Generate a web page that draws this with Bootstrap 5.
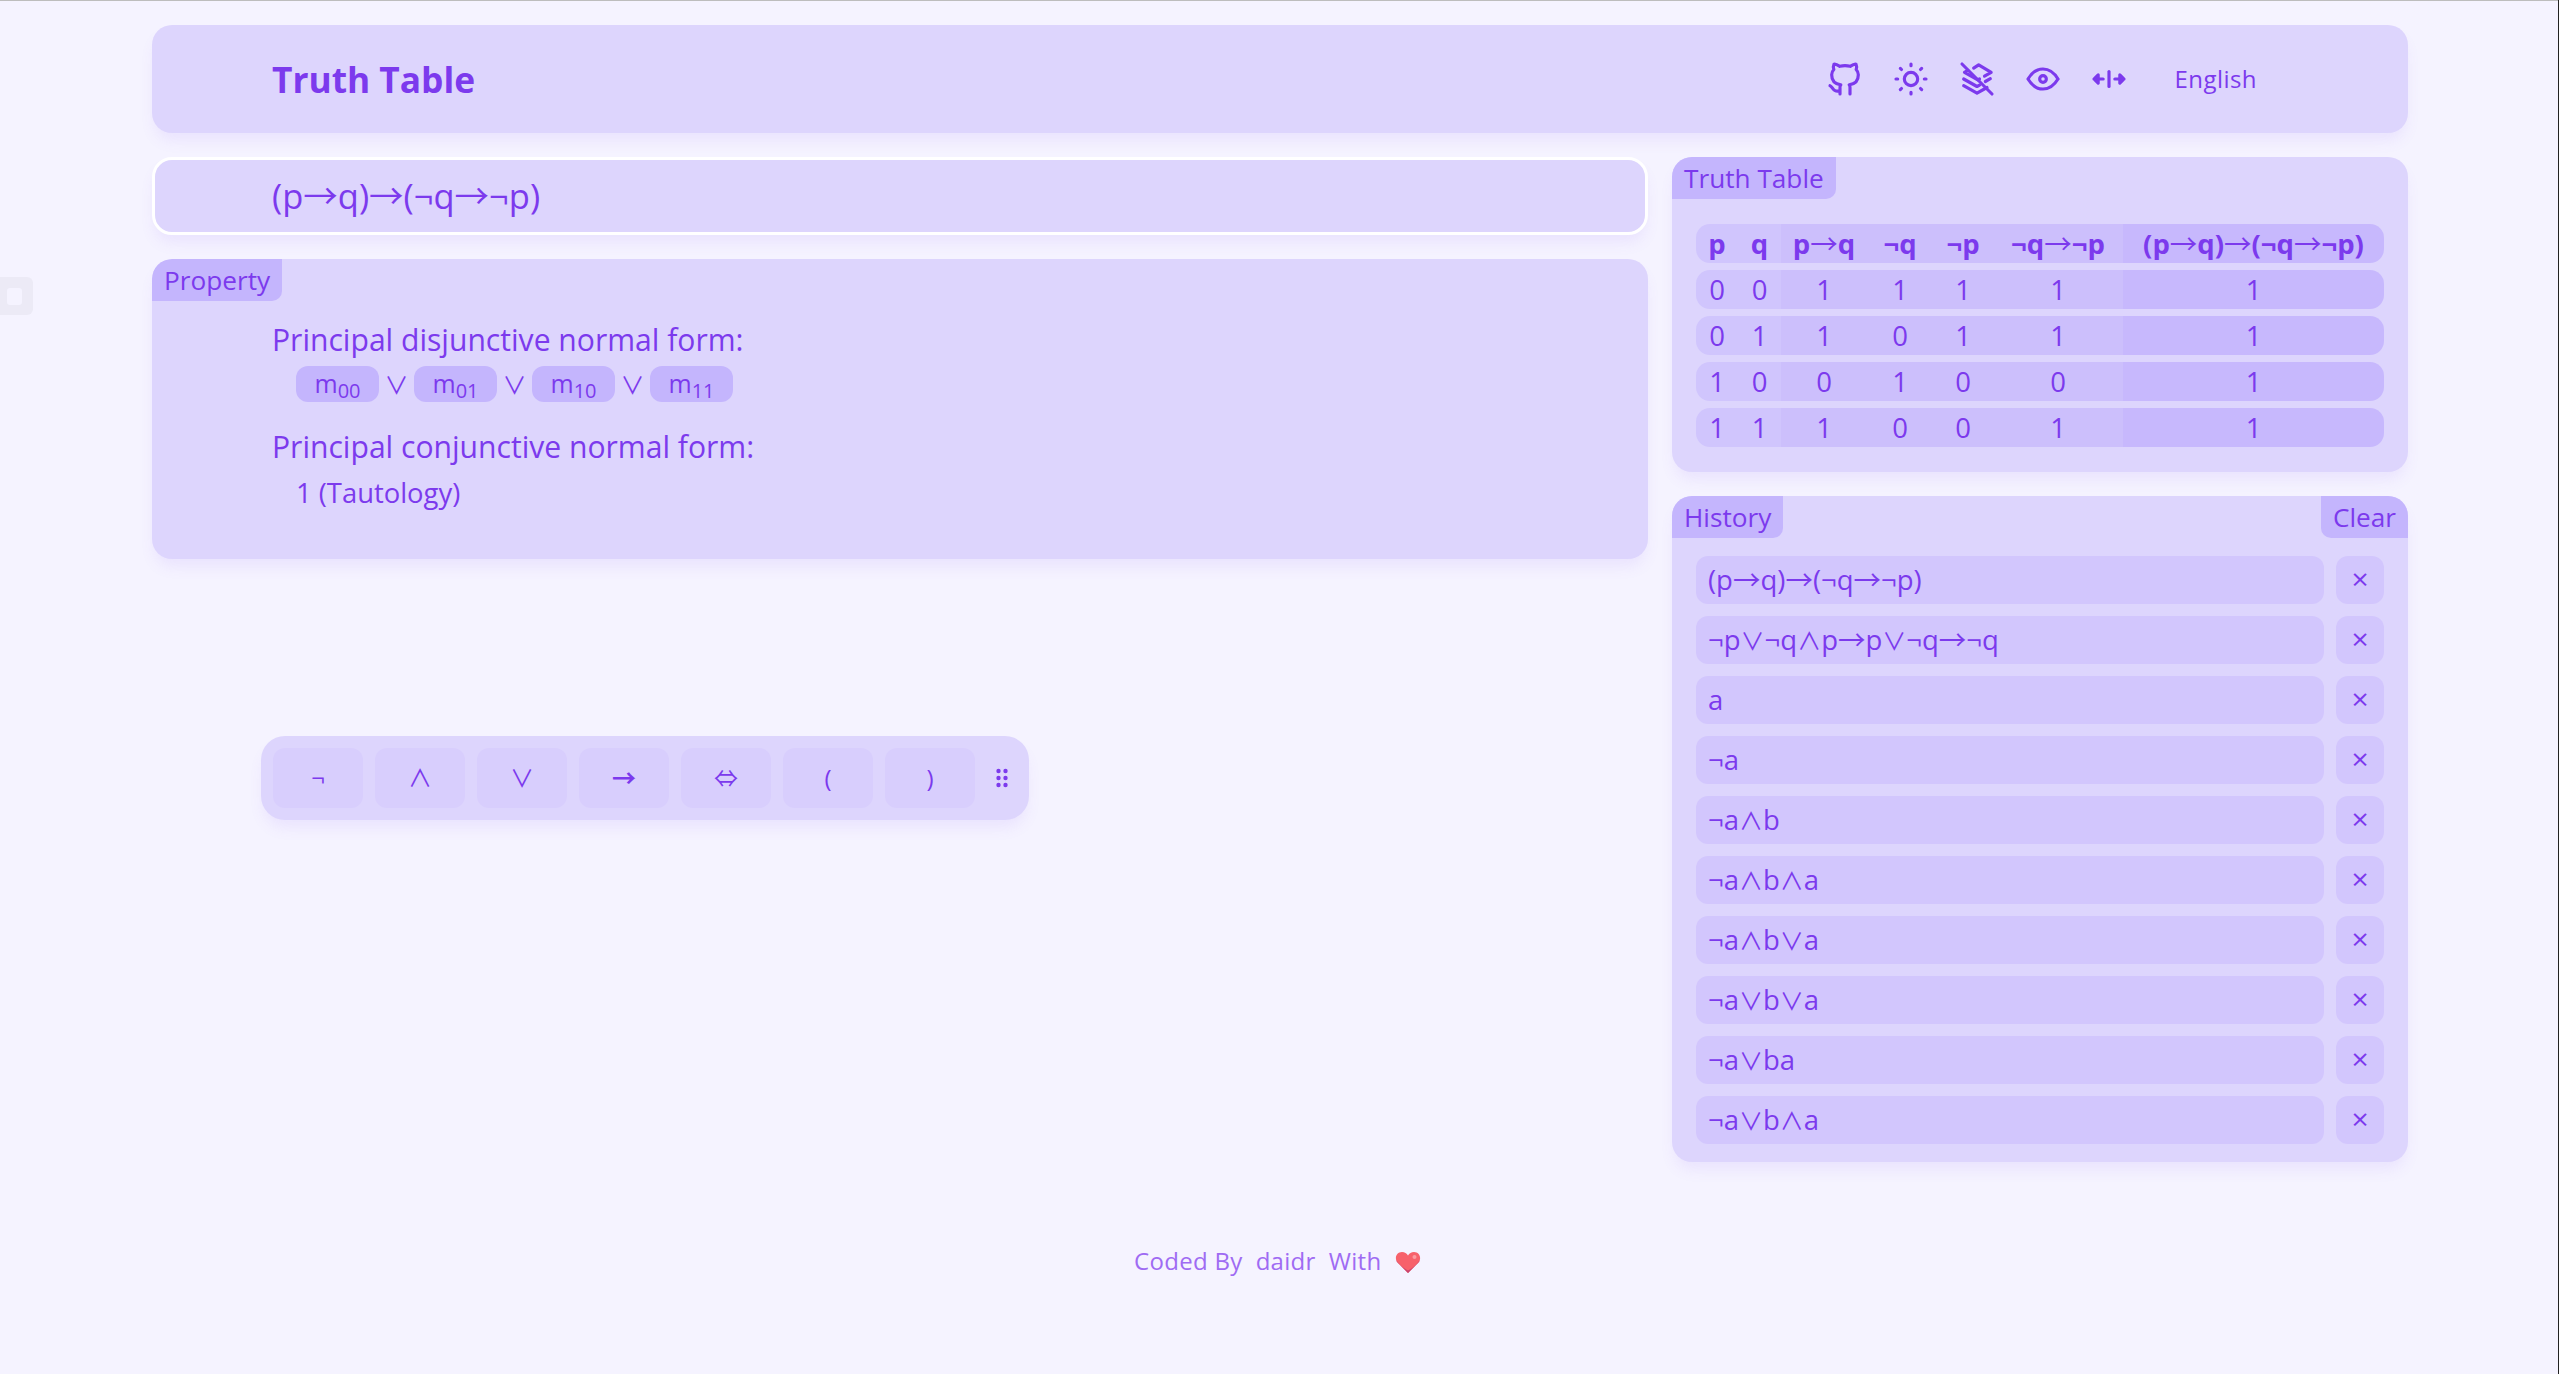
<!DOCTYPE html>
<html lang="en">
<head>
    <meta charset="UTF-8">
    <meta name="viewport" content="width=device-width, initial-scale=1.0">
    <title>Truth Table</title>
    <link href="https://cdn.jsdelivr.net/npm/bootstrap@5.3.0/dist/css/bootstrap.min.css" rel="stylesheet">
    <style>
        body {
            background-color: #f5f3ff;
            font-family: "Open Sans", "Noto Sans", "DejaVu Sans", sans-serif;
            color: #7c3aed;
            min-height: 1374px;
        }

        /* thin window edges in the capture */
        body::before {
            content: "";
            position: fixed;
            left: 0;
            right: 0;
            top: 0;
            height: 1px;
            background: #bdbdbd;
        }

        body::after {
            content: "";
            position: fixed;
            right: 0;
            top: 0;
            bottom: 0;
            width: 1px;
            background: #222;
        }

        .op-arrow, .op-logic {
            font-family: "Noto Sans CJK SC", "DejaVu Sans", sans-serif;
            font-weight: 400;
            line-height: 1;
        }

        .op-logic { font-size: 24px; }

        .page-wrap {
            width: 2256px;
            margin-left: 152px;
            padding-top: 25px;
        }

        .panel-box {
            background: #ddd5fd;
            border-radius: 20px;
            box-shadow: 0 10px 15px -3px rgba(139, 92, 246, .1);
        }

        /* header */
        .top-bar {
            height: 108px;
            padding-left: 120px;
            padding-right: 151px;
            margin-bottom: 24px;
        }

        .app-title {
            font-size: 35.3px;
            font-weight: 700;
            margin: 0;
        }

        .tool-icon {
            width: 40px;
            height: 40px;
            margin-right: 26px;
            fill: none;
            stroke: #7c3aed;
            stroke-width: 1.9;
            stroke-linecap: round;
            stroke-linejoin: round;
        }

        .lang-name {
            font-size: 24px;
            letter-spacing: .45px;
            margin-left: 45px;
        }

        /* columns */
        .left-side { width: 1496px; }
        .right-side { width: 736px; }

        .formula-input.form-control {
            height: 78px;
            line-height: 71px;
            background: #ddd5fd;
            border: 3px solid #fff;
            border-radius: 20px;
            padding: 0 0 0 117px;
            font-size: 34.5px;
            color: #7c3aed;
            margin-bottom: 24px;
            box-shadow: 0 10px 15px -3px rgba(139, 92, 246, .1);
        }

        .tab-row { height: 42px; }

        .tab-label {
            height: 42px;
            line-height: 42px;
            padding: 0 12px;
            font-size: 26.200px;
            background: #c4b5fd;
            border-bottom-right-radius: 10px;
            border-top-left-radius: 20px;
        }

        .tab-clear {
            border-radius: 0 20px 0 10px;
            cursor: pointer;
        }

        /* property */
        .property-box { height: 300px; overflow: hidden; }

        .property-body { padding: 21px 0 0 120px; }

        .prop-heading {
            font-size: 30.100px;
            line-height: 36px;
            margin: 0 0 8px;
        }

        .prop-heading-second {
            margin-top: 27px;
            margin-bottom: 10px;
        }

        .prop-value {
            padding-left: 24px;
            font-size: 27.400px;
            line-height: 36px;
        }

        .term-pill {
            width: 83px;
            height: 36px;
            line-height: 34px;
            text-align: center;
            background: #c4b5fd;
            border-radius: 12px;
            white-space: nowrap;
            font-size: 25px;
        }

        .term-pill sub {
            font-size: 20px;
            bottom: -.25em;
        }

        .term-sep { width: 35px; text-align: center; }

        /* truth table */
        .panel-body-pad { padding: 18px 24px; }

        .truth-grid {
            width: 688px;
            table-layout: fixed;
            border-collapse: separate;
            border-spacing: 0 7px;
            font-size: 27.500px;
            text-align: center;
        }

        .truth-grid th, .truth-grid td {
            height: 39px;
            padding: 0;
            line-height: 38px;
            white-space: nowrap;
            background: #d0c5fd;
        }

        .truth-grid th { font-weight: 700; }

        .truth-grid th:nth-child(n+3), .truth-grid td:nth-child(n+3) { background: #ccbffc; }
        .truth-grid th:last-child, .truth-grid td:last-child { background: #c7b8fd; border-radius: 0 14px 14px 0; }
        .truth-grid th:first-child, .truth-grid td:first-child { border-radius: 14px 0 0 14px; }

        .truth-grid .w-p { width: 42px; }
        .truth-grid .w-q { width: 43px; }
        .truth-grid .w-pq { width: 86px; }
        .truth-grid .w-nq { width: 66px; }
        .truth-grid .w-np { width: 60px; }
        .truth-grid .w-nqp { width: 130px; }

        /* history */
        .history-line { margin-top: 12px; }
        .history-line:first-child { margin-top: 0; }

        .history-text {
            height: 48px;
            line-height: 47px;
            width: 628px;
            padding-left: 12px;
            background: #d2c6fd;
            border-radius: 12px;
            font-size: 27.500px;
            white-space: nowrap;
        }

        .history-del {
            width: 48px;
            height: 48px;
            line-height: 46px;
            text-align: center;
            background: #d2c6fd;
            border-radius: 12px;
            font-size: 30px;
        }

        /* floating keyboard */
        .key-float {
            position: absolute;
            left: 261px;
            top: 736px;
            width: 768px;
            height: 84px;
            padding: 12px;
            gap: 12px;
            border-radius: 24px;
        }

        .key-btn {
            width: 90px;
            height: 60px;
            line-height: 60px;
            text-align: center;
            background: #d8cefd;
            border-radius: 12px;
            font-size: 24px;
        }

        .key-btn-bold .op-arrow { font-weight: 700; }

        .drag-dots {
            width: 12px;
            height: 20px;
            margin-left: 9px;
            fill: #7c3aed;
        }

        /* left edge handle */
        .edge-handle {
            position: absolute;
            left: 0;
            top: 277px;
            width: 33px;
            height: 38px;
            background: #eceaf6;
            border-radius: 0 6px 6px 0;
        }

        .edge-handle::after {
            content: "";
            position: absolute;
            left: 7px;
            top: 11px;
            width: 15px;
            height: 17px;
            background: #f5f3ff;
            border-radius: 3px;
        }

        .foot-line {
            position: absolute;
            top: 1244px;
            left: 1134px;
            font-size: 24px;
            line-height: 34px;
            letter-spacing: .3px;
            color: #9f6bf3;
            white-space: pre;
        }

        .heart-icon { width: 26px; height: 24px; vertical-align: -4px; }
    </style>
</head>
<body>
    <div class="edge-handle"></div>

    <div class="page-wrap">
        <header class="panel-box top-bar d-flex align-items-center justify-content-between">
            <h1 class="app-title">Truth Table</h1>
            <div class="d-flex align-items-center">
                <svg class="tool-icon" viewBox="0 0 24 24"><path d="M9 19c-4.3 1.4 -4.3 -2.5 -6 -3m12 5v-3.5c0 -1 .1 -1.4 -.5 -2c2.8 -.3 5.5 -1.4 5.5 -6a4.6 4.6 0 0 0 -1.3 -3.2a4.2 4.2 0 0 0 -.1 -3.2s-1.1 -.3 -3.5 1.3a12.3 12.3 0 0 0 -6.2 0c-2.4 -1.6 -3.5 -1.3 -3.5 -1.3a4.2 4.2 0 0 0 -.1 3.2a4.6 4.6 0 0 0 -1.3 3.2c0 4.6 2.7 5.7 5.5 6c-.6 .6 -.6 1.2 -.5 2v3.5"/></svg>
                <svg class="tool-icon" viewBox="0 0 24 24"><circle cx="12" cy="12" r="4"/><path d="M3 12h1m8 -9v1m8 8h1m-9 8v1m-6.4 -15.4l.7 .7m12.1 -.7l-.7 .7m0 11.4l.7 .7m-12.1 -.7l-.7 .7"/></svg>
                <svg class="tool-icon" viewBox="0 0 24 24"><path d="M10 5.500 13 3.500l7.500 4.500-4 2.300m-3 1.700-1 .5-8-4.500 2-1.200"/><path d="M4 12l8 4.500 1.500-.8"/><path d="M4 16l8 4.500 6-3.400"/><path d="M17 13.500l3-1.700"/><path d="M3 3l18 18"/></svg>
                <svg class="tool-icon" viewBox="0 0 24 24"><path d="M10 12a2 2 0 1 0 4 0a2 2 0 0 0 -4 0"/><path d="M21 12c-2.400 4 -5.400 6 -9 6c-3.600 0 -6.600 -2 -9 -6c2.400 -4 5.400 -6 9 -6c3.600 0 6.600 2 9 6"/></svg>
                <svg class="tool-icon me-0" viewBox="0 0 24 24"><path d="M12 7.500v9"/><path d="M3 12h5.500M5.500 9.500 3 12l2.500 2.500zM15.500 12h5.500M18.500 9.500 21 12l-2.500 2.500z"/></svg>
                <span class="lang-name">English</span>
            </div>
        </header>

        <div class="d-flex gap-4">
            <div class="left-side">
                <div class="form-control formula-input has-ops" contenteditable="true">(p→q)→(¬q→¬p)</div>
                <section class="panel-box property-box">
                    <div class="tab-row d-flex"><div class="tab-label">Property</div></div>
                    <div class="property-body">
                        <p class="prop-heading">Principal disjunctive normal form:</p>
                        <div class="prop-value d-flex">
                            <span class="term-pill">m<sub>00</sub></span><span class="term-sep has-ops">∨</span>
                            <span class="term-pill">m<sub>01</sub></span><span class="term-sep has-ops">∨</span>
                            <span class="term-pill">m<sub>10</sub></span><span class="term-sep has-ops">∨</span>
                            <span class="term-pill">m<sub>11</sub></span>
                        </div>
                        <p class="prop-heading prop-heading-second">Principal conjunctive normal form:</p>
                        <div class="prop-value">1 (Tautology)</div>
                    </div>
                </section>
            </div>

            <div class="right-side d-flex flex-column gap-4">
                <section class="panel-box">
                    <div class="tab-row d-flex"><div class="tab-label">Truth Table</div></div>
                    <div class="panel-body-pad">
                        <table class="truth-grid">
                            <thead>
                                <tr><th class="w-p">p</th><th class="w-q">q</th><th class="w-pq has-ops">p→q</th><th class="w-nq">¬q</th><th class="w-np">¬p</th><th class="w-nqp has-ops">¬q→¬p</th><th class="has-ops">(p→q)→(¬q→¬p)</th></tr>
                            </thead>
                            <tbody id="truthRows"></tbody>
                        </table>
                    </div>
                </section>

                <section class="panel-box">
                    <div class="tab-row d-flex justify-content-between">
                        <div class="tab-label">History</div>
                        <div class="tab-label tab-clear">Clear</div>
                    </div>
                    <div class="panel-body-pad d-flex flex-column" id="historyRows"></div>
                </section>
            </div>
        </div>
    </div>

    <div class="panel-box key-float d-flex align-items-center" id="keyRow"></div>

    <footer class="foot-line">Coded By  daidr  With  <svg class="heart-icon" viewBox="0 0 26 24"><path d="M13 23 2.500 12.500C-1 8 1.500 2 7 2c2.700 0 4.700 1.300 6 3.500C14.300 3.300 16.300 2 19 2c5.500 0 8 6 4.500 10.500z" fill="#f7616b"/><path d="M13 23 2.500 12.500C1.800 11.600 1.300 10.700 1 9.700 3 13 8 18 13 20.500 18 18 23 13 25 9.700c-.3 1-.8 1.900-1.500 2.800z" fill="#c9446f"/><circle cx="19.500" cy="7" r="2" fill="#fb9a9f"/></svg></footer>

    <script src="https://cdn.jsdelivr.net/npm/bootstrap@5.3.0/dist/js/bootstrap.bundle.min.js"></script>
    <script>
        document.addEventListener("DOMContentLoaded", () => {
            const truthData = [
                [0, 0, 1, 1, 1, 1, 1],
                [0, 1, 1, 0, 1, 1, 1],
                [1, 0, 0, 1, 0, 0, 1],
                [1, 1, 1, 0, 0, 1, 1]
            ];
            document.getElementById("truthRows").innerHTML = truthData
                .map(row => `<tr>${row.map(v => `<td>${v}</td>`).join("")}</tr>`)
                .join("");

            const historyData = ["(p→q)→(¬q→¬p)", "¬p∨¬q∧p→p∨¬q→¬q", "a", "¬a", "¬a∧b", "¬a∧b∧a", "¬a∧b∨a", "¬a∨b∨a", "¬a∨ba", "¬a∨b∧a"];
            document.getElementById("historyRows").innerHTML = historyData
                .map(item => `<div class="history-line d-flex justify-content-between"><div class="history-text has-ops">${item}</div><div class="history-del">×</div></div>`)
                .join("");

            const keys = ["¬", "∧", "∨", "→", "⇔", "(", ")"];
            document.getElementById("keyRow").innerHTML = keys
                .map(k => `<div class="key-btn has-ops ${k === "→" ? "key-btn-bold" : ""}">${k}</div>`)
                .join("") +
                `<svg class="drag-dots" viewBox="0 0 12 20"><circle cx="2.500" cy="3" r="2.200"/><circle cx="9.500" cy="3" r="2.200"/><circle cx="2.500" cy="10" r="2.200"/><circle cx="9.500" cy="10" r="2.200"/><circle cx="2.500" cy="17" r="2.200"/><circle cx="9.500" cy="17" r="2.200"/></svg>`;

            // the logic operators come from the CJK font, they are wider there
            document.querySelectorAll(".has-ops").forEach(el => {
                el.innerHTML = el.textContent.replace(/[→⇔]/g, m => `<span class="op-arrow">${m}</span>`)
                    .replace(/[∧∨]/g, m => `<span class="op-logic">${m}</span>`);
            });
        });
    </script>
</body>
</html>
